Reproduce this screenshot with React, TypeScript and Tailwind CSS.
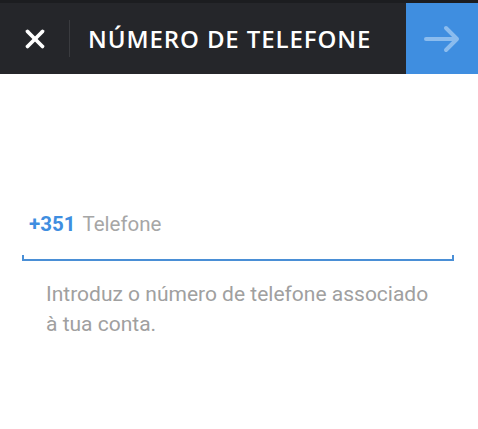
import { X } from "lucide-react";

export default function App() {
  return (
    <div className="w-[478px] h-[429px] bg-white overflow-hidden">
      {/* Header */}
      <div className="h-[3px] bg-[#1c1d20]" />
      <div className="flex h-[71px] bg-[#25262a] items-stretch">
        <div className="flex w-[70px] items-center justify-center border-r border-[#3a3b3f] my-[17px]">
          <X className="w-[30px] h-[30px] text-white" strokeWidth={3} />
        </div>
        <div
          className="flex-1 flex items-center pl-[18px] text-white text-[24px] font-semibold tracking-[0.9px]"
          style={{ fontFamily: '"Open Sans", sans-serif' }}
        >
          NÚMERO DE TELEFONE
        </div>
        <div className="w-[72px] bg-[#3f8ee0] flex items-center justify-center">
          <svg width="38" height="28" viewBox="0 0 38 28" fill="none" stroke="#8bbcee" strokeWidth="4" strokeLinecap="round" strokeLinejoin="round">
            <path d="M3 14h31M23 3l11 11-11 11" />
          </svg>
        </div>
      </div>

      {/* Body */}
      <div className="pt-[136px] px-[22px]" style={{ fontFamily: "Roboto, sans-serif" }}>
        <div className="flex items-baseline gap-[7px] pl-[7px] text-[20.5px] leading-[28px]">
          <span className="text-[#3f8ee0] font-bold">+351</span>
          <span className="text-[#a6a6a6]">Telefone</span>
        </div>
        <div className="mt-[17px] h-[6px] w-[432px] border-x-2 border-b-2 border-[#4a8fd6]" />
        <p className="mt-[18px] pl-[24px] text-[21px] leading-[30px] text-[#a0a0a0] whitespace-nowrap">
          Introduz o número de telefone associado
          <br />à tua conta.
        </p>
      </div>
    </div>
  );
}
